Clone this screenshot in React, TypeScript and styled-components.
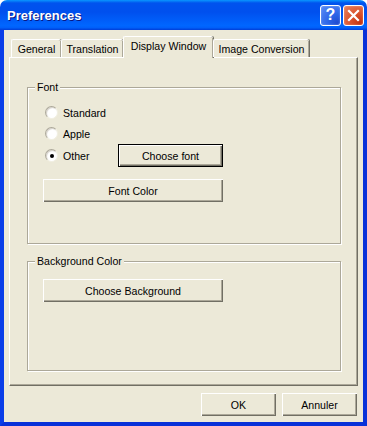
import styled, { createGlobalStyle } from "styled-components";

const GlobalStyle = createGlobalStyle`
    html, body {
        margin: 0;
        padding: 0;
        background: #ffffff;
    }
    * {
        box-sizing: border-box;
    }
`;

const Window = styled.div`
    width: 367px;
    height: 426px;
    display: flex;
    flex-direction: column;
    font-family: "Liberation Sans", Arial, sans-serif;
    font-size: 10.6px;
    color: #000;
`;

const TitleBar = styled.div`
    height: 30px;
    display: flex;
    align-items: center;
    padding: 0 3px 0 7px;
    border-radius: 7px 7px 0 0;
    background: linear-gradient(
        to bottom,
        #0997ff 0%,
        #0053ee 10%,
        #0050ee 40%,
        #0066ff 85%,
        #0060fa 92%,
        #003dd7 100%
    );
`;

const Title = styled.div`
    flex: 1;
    color: #fff;
    font-weight: bold;
    font-size: 13px;
    padding-top: 1px;
    text-shadow: 1px 1px 0 #0a1883;
`;

const CaptionButton = styled.div<{ $kind: "help" | "close" }>`
    width: 21px;
    height: 21px;
    margin-left: 2px;
    border: 1px solid #fff;
    border-radius: 3px;
    display: flex;
    align-items: center;
    justify-content: center;
    color: #fff;
    font-weight: bold;
    font-size: 16px;
    background: ${(p) =>
        p.$kind === "help"
            ? "radial-gradient(circle at 85% 90%, #1f4bd0 0%, #2d66e8 40%, #5a8cf5 100%)"
            : "radial-gradient(circle at 85% 90%, #c23310 0%, #d9502a 40%, #e8825e 100%)"};
    box-shadow: inset 0 0 2px rgba(255, 255, 255, 0.4);
`;

const Frame = styled.div`
    flex: 1;
    display: flex;
    flex-direction: column;
    background: #ece9d8;
    border: 4px solid #0831d9;
    border-top: none;
    border-left-color: #0a3ee8;
    padding: 6px 5px 6px 5px;
`;

const TabStrip = styled.div`
    height: 21px;
    display: flex;
    align-items: flex-end;
    padding-left: 2px;
    position: relative;
    z-index: 1;
`;

const Tab = styled.div<{ $width: number; $active?: boolean }>`
    width: ${(p) => p.$width}px;
    height: ${(p) => (p.$active ? 22 : 18)}px;
    margin-bottom: ${(p) => (p.$active ? -1 : 0)}px;
    background: #ece9d8;
    border-top: 1px solid #fff;
    border-left: 1px solid #fff;
    border-radius: 2px 2px 0 0;
    box-shadow: inset -1px 0 0 #aca899, 1px 0 0 #716f64;
    display: flex;
    justify-content: center;
    padding-top: ${(p) => (p.$active ? 3 : 3)}px;
    white-space: nowrap;
`;

const Panel = styled.div`
    flex: 1;
    display: flex;
    flex-direction: column;
    gap: 17px;
    border-top: 1px solid #fff;
    border-left: 1px solid #fff;
    border-right: 1px solid #716f64;
    border-bottom: 1px solid #716f64;
    box-shadow: inset -1px -1px 0 #aca899;
    padding: 29px 0 0 17px;
`;

const GroupBox = styled.div<{ $height: number }>`
    position: relative;
    width: 314px;
    height: ${(p) => p.$height}px;
    border: 1px solid #aca899;
    box-shadow: inset 1px 1px 0 #fff, 1px 1px 0 #fff;
    padding: 0 0 0 15px;
    display: flex;
    flex-direction: column;
`;

const GroupTitle = styled.span`
    position: absolute;
    top: -7px;
    left: 7px;
    padding: 0 2px;
    background: #ece9d8;
    line-height: 13px;
`;

const RadioList = styled.div`
    margin-top: 14px;
    display: flex;
    flex-direction: column;
`;

const RadioRow = styled.div`
    min-height: 21px;
    display: flex;
    align-items: center;
    padding-left: 2px;
`;

const RadioLabel = styled.label`
    width: 73px;
    display: flex;
    align-items: center;
    gap: 5px;
`;

const RadioDot = styled.span<{ $checked?: boolean }>`
    width: 13px;
    height: 13px;
    border-radius: 50%;
    background: #fff;
    border: 1px solid;
    border-color: #aca899 #f1efe2 #f1efe2 #aca899;
    box-shadow: inset 1px 1px 1px #d4d0c8;
    display: flex;
    align-items: center;
    justify-content: center;
    &::after {
        content: "";
        width: 4px;
        height: 4px;
        border-radius: 50%;
        background: ${(p) => (p.$checked ? "#000" : "transparent")};
    }
`;

const Button = styled.button<{ $width: number; $default?: boolean }>`
    width: ${(p) => p.$width}px;
    height: 23px;
    margin: 0;
    padding: 0;
    font-family: "Liberation Sans", Arial, sans-serif;
    font-size: 10.6px;
    color: #000;
    background: #ece9d8;
    border: ${(p) => (p.$default ? "1px solid #000" : "none")};
    border-radius: 0;
    box-shadow: inset 1px 1px 0 #fff, inset -1px -1px 0 #716f64,
        inset -2px -2px 0 #aca899;
`;

const FontColorButton = styled(Button)`
    margin-top: 12px;
`;

const BackgroundButton = styled(Button)`
    margin-top: 17px;
`;

const Footer = styled.div`
    margin-top: 7px;
    display: flex;
    justify-content: flex-end;
    gap: 6px;
    padding-right: 1px;
`;

export default function App() {
    return (
        <>
            <GlobalStyle />
            <Window>
                <TitleBar>
                    <Title>Preferences</Title>
                    <CaptionButton $kind="help">?</CaptionButton>
                    <CaptionButton $kind="close">
                        <svg width="13" height="13" viewBox="0 0 13 13">
                            <path d="M2 2 L11 11 M11 2 L2 11" stroke="#fff" strokeWidth="2.2" strokeLinecap="square" />
                        </svg>
                    </CaptionButton>
                </TitleBar>
                <Frame>
                    <TabStrip>
                        <Tab $width={50}>General</Tab>
                        <Tab $width={62}>Translation</Tab>
                        <Tab $width={90} $active>Display Window</Tab>
                        <Tab $width={96}>Image Conversion</Tab>
                    </TabStrip>
                    <Panel>
                        <GroupBox $height={157}>
                            <GroupTitle>Font</GroupTitle>
                            <RadioList>
                                <RadioRow>
                                    <RadioLabel><RadioDot />Standard</RadioLabel>
                                </RadioRow>
                                <RadioRow>
                                    <RadioLabel><RadioDot />Apple</RadioLabel>
                                </RadioRow>
                                <RadioRow>
                                    <RadioLabel><RadioDot $checked />Other</RadioLabel>
                                    <Button $width={105} $default>Choose font</Button>
                                </RadioRow>
                            </RadioList>
                            <FontColorButton $width={180}>Font Color</FontColorButton>
                        </GroupBox>
                        <GroupBox $height={110}>
                            <GroupTitle>Background Color</GroupTitle>
                            <BackgroundButton $width={180}>Choose Background</BackgroundButton>
                        </GroupBox>
                    </Panel>
                    <Footer>
                        <Button $width={75}>OK</Button>
                        <Button $width={75}>Annuler</Button>
                    </Footer>
                </Frame>
            </Window>
        </>
    );
}
